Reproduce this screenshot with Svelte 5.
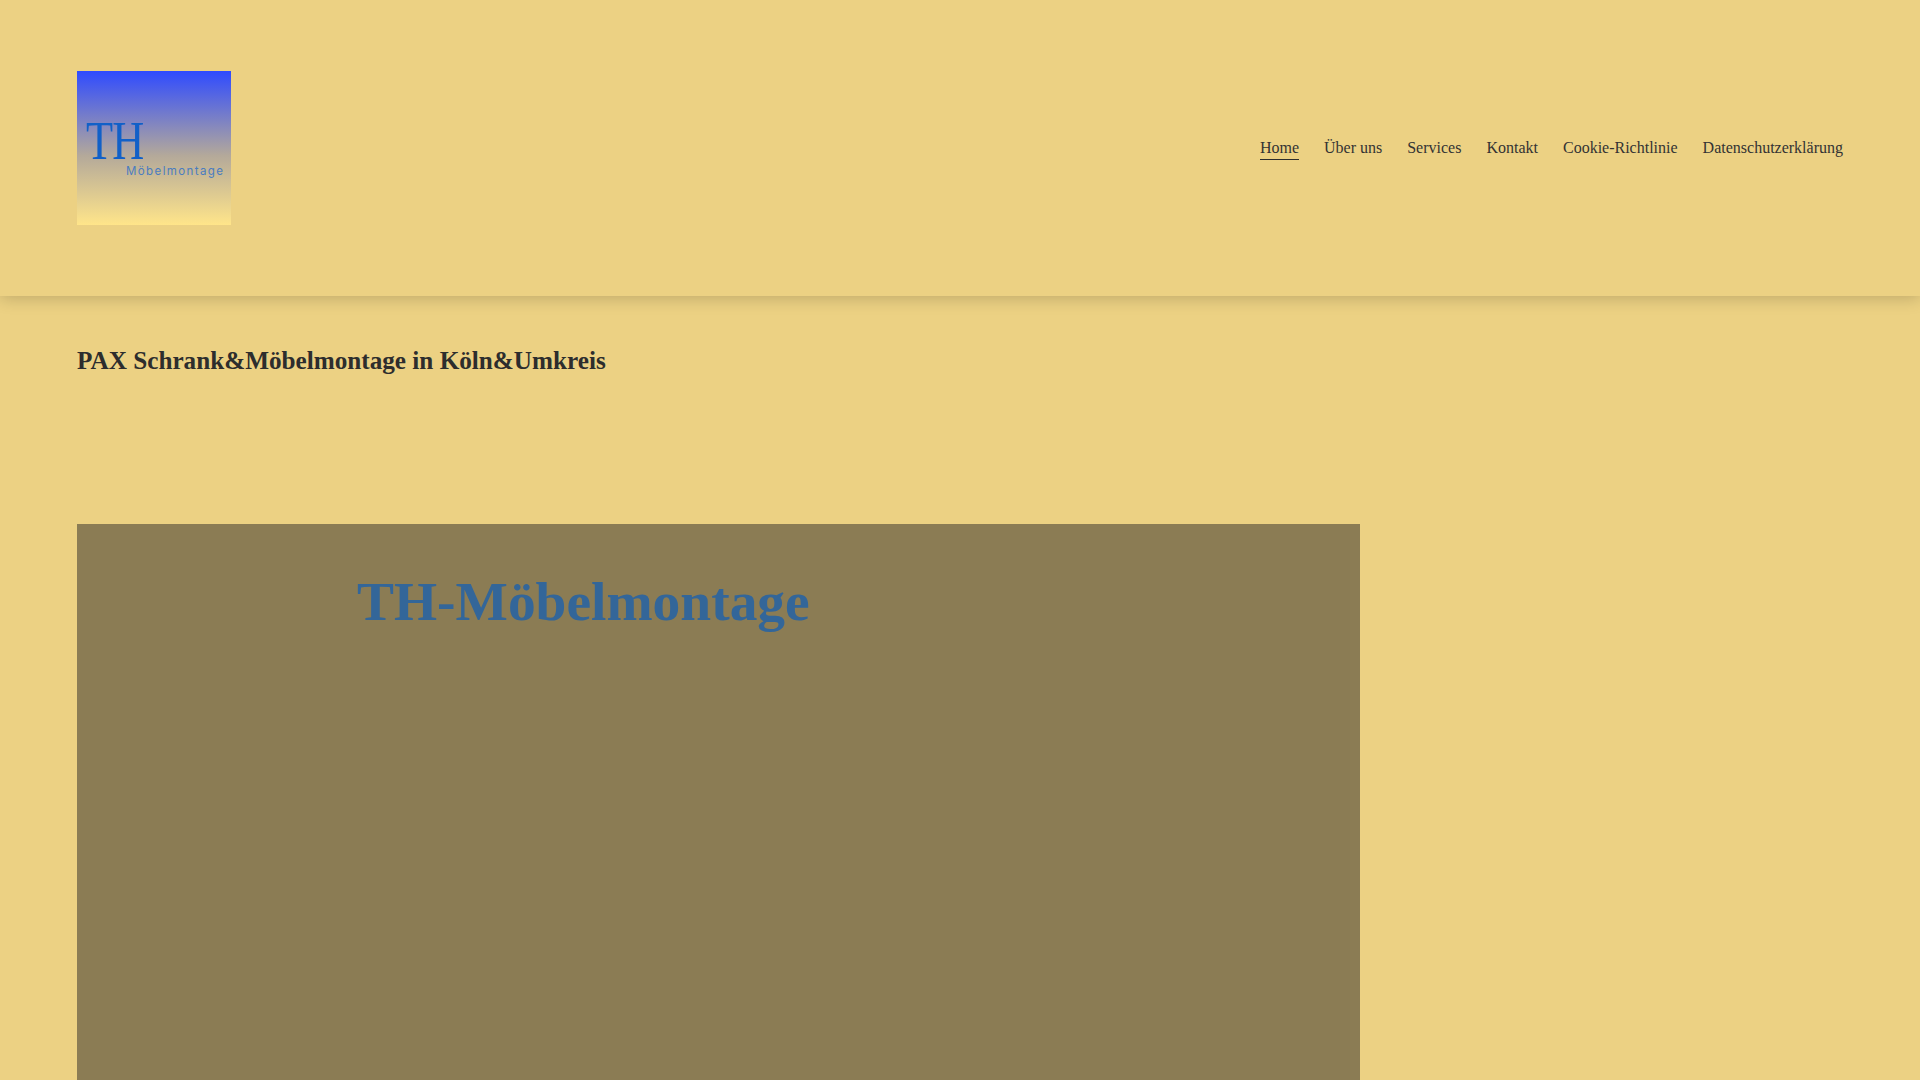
<script>
	const navItems = ['Home', 'Über uns', 'Services', 'Kontakt', 'Cookie-Richtlinie', 'Datenschutzerklärung'];
</script>

<header class="site-header">
	<a class="logo" href="#top">
		<span class="logo-th">TH</span>
		<span class="logo-sub">Möbelmontage</span>
	</a>
	<nav class="main-nav">
		{#each navItems as item, i}
			<a href="#top" class:current={i === 0}>{item}</a>
		{/each}
	</nav>
</header>

<main class="content">
	<h1 class="page-title">PAX Schrank&Möbelmontage in Köln&Umkreis</h1>
	<section class="hero">
		<h2>TH-Möbelmontage</h2>
	</section>
</main>

<style>
	:global(html), :global(body) {
		height: 100%;
		overflow: hidden;
	}

	:global(body) {
		background: #ecd183;
		color: #2d2d2d;
		font-family: 'Liberation Serif', 'Times New Roman', serif;
	}

	.site-header {
		display: flex;
		justify-content: space-between;
		align-items: center;
		height: 296px;
		box-sizing: border-box;
		padding: 0 77px;
		background: #ecd183;
		box-shadow: 0 2px 16px rgba(0, 0, 0, 0.2);
		position: relative;
	}

	.logo {
		display: block;
		position: relative;
		width: 154px;
		height: 154px;
		background: linear-gradient(180deg, #2f4bff 0%, #b4a99a 55%, #ffe58a 100%);
		text-decoration: none;
		overflow: hidden;
	}

	.logo-th {
		position: absolute;
		left: 9px;
		top: 42px;
		font-size: 54px;
		line-height: 56px;
		letter-spacing: -1px;
		color: #1160c8;
		transform: scaleX(0.82);
		transform-origin: left;
	}

	.logo-sub {
		position: absolute;
		left: 49px;
		top: 93px;
		font-family: Inter, 'Open Sans', sans-serif;
		font-size: 11.5px;
		line-height: 14px;
		letter-spacing: 1.4px;
		color: #4a7cc0;
	}

	.main-nav {
		display: flex;
		gap: 25px;
		font-size: 16px;
	}

	.main-nav a {
		color: #333;
		text-decoration: none;
		line-height: 23px;
		border-bottom: 1px solid transparent;
	}

	.main-nav a.current {
		border-bottom-color: #2d2d2d;
	}

	.content {
		padding: 0 77px;
	}

	.page-title {
		margin: 49px 0 0;
		font-size: 25.2px;
		line-height: 32px;
		font-weight: 700;
		color: #2d2d2d;
	}

	.hero {
		width: 1283px;
		height: 600px;
		margin-top: 147px;
		padding: 39px 0 0 280px;
		box-sizing: border-box;
		background: #8b7c54;
	}

	.hero h2 {
		margin: 0;
		font-size: 55.44px;
		line-height: 78px;
		font-weight: 700;
		color: #336699;
	}
</style>
